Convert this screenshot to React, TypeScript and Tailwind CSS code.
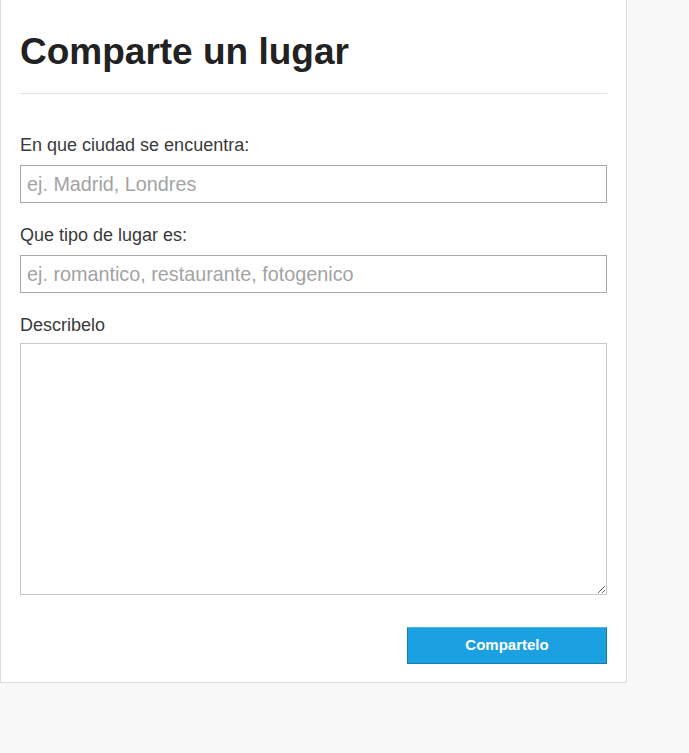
export default function App() {
  return (
    <div className="min-h-[753px] bg-[#f8f8f8] font-['Liberation_Sans',Arial,sans-serif]">
      <div className="w-[627px] border-x border-b border-[#dddddd] bg-white px-[19px] pt-[32px] pb-[18px]">
        <h1 className="text-[37px] leading-[40px] font-bold text-[#222222]">Comparte un lugar</h1>
        <hr className="mt-[21px] border-t border-[#e3e3e3]" />

        <form className="mt-[41px]" onSubmit={(e) => e.preventDefault()}>
          <label className="block text-[18px] leading-[20px] text-[#3a3a3a]">En que ciudad se encuentra:</label>
          <input
            type="text"
            placeholder="ej. Madrid, Londres"
            className="mt-[10px] block h-[38px] w-full border border-[#a9a9a9] px-[6px] text-[19.8px] text-[#333333] placeholder:text-[#a3a3a3] outline-none"
          />

          <label className="mt-[22px] block text-[18px] leading-[20px] text-[#3a3a3a]">Que tipo de lugar es:</label>
          <input
            type="text"
            placeholder="ej. romantico, restaurante, fotogenico"
            className="mt-[10px] block h-[38px] w-full border border-[#a9a9a9] px-[6px] text-[19.8px] text-[#333333] placeholder:text-[#a3a3a3] outline-none"
          />

          <label className="mt-[22px] block text-[18px] leading-[20px] text-[#3a3a3a]">Describelo</label>
          <textarea className="mt-[8px] block h-[252px] w-full resize-y border border-[#c8c8c8] p-[6px] text-[16px] outline-none" />

          <div className="mt-[32px] flex justify-end">
            <button
              type="submit"
              className="h-[37px] w-[200px] border border-[#1a79ad] border-t-[#4db6ea] bg-[#1ba1e2] text-[15px] font-bold text-white"
            >
              Compartelo
            </button>
          </div>
        </form>
      </div>
    </div>
  );
}
